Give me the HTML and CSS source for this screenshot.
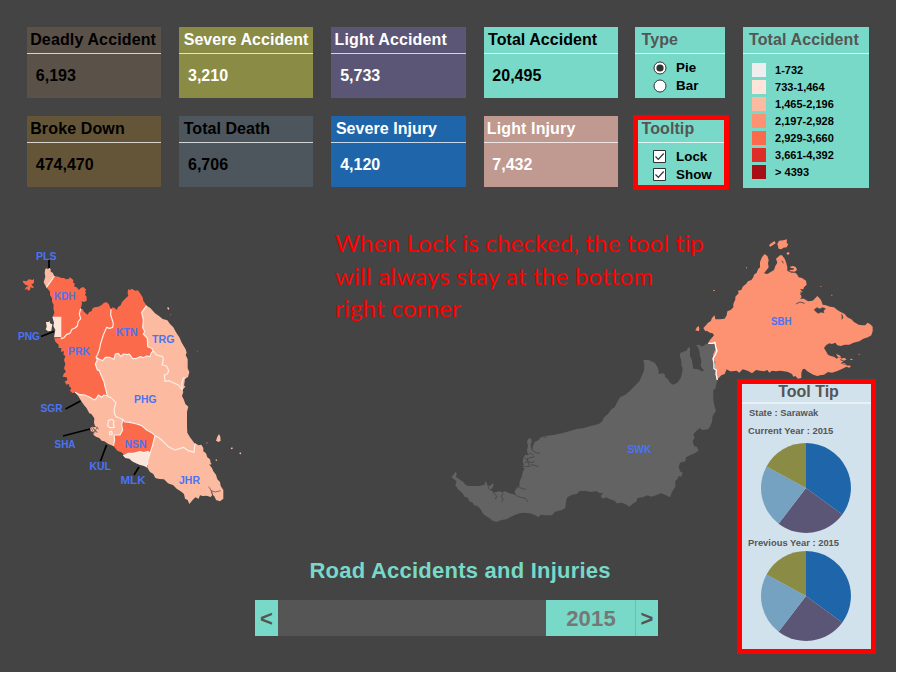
FILE: index.html
```html
<!DOCTYPE html>
<html lang="en">
<head>
<meta charset="utf-8">
<title>Road Accidents and Injuries</title>
<link rel="stylesheet" href="styles.css">
</head>
<body>
<main class="dashboard">
  <header class="top">
    <section class="stats">
      <article class="card deadly tight"><h2>Deadly Accident</h2><p>6,193</p></article>
      <article class="card severe light-text"><h2>Severe Accident</h2><p>3,210</p></article>
      <article class="card light light-text tight"><h2>Light Accident</h2><p>5,733</p></article>
      <article class="card total"><h2>Total Accident</h2><p>20,495</p></article>
      <article class="card broke tight"><h2>Broke Down</h2><p>474,470</p></article>
      <article class="card death"><h2>Total Death</h2><p>6,706</p></article>
      <article class="card severe-injury light-text"><h2>Severe Injury</h2><p>4,120</p></article>
      <article class="card light-injury light-text tight"><h2>Light Injury</h2><p>7,432</p></article>
    </section>
    <section class="controls">
      <div class="panel">
        <h2>Type</h2>
        <div class="options">
          <div class="option"><svg width="14" height="14" viewBox="0 0 14 14"><circle cx="7" cy="7" r="6" fill="#fff" stroke="#333"/><circle cx="7" cy="7" r="3.6" fill="#333"/></svg>Pie</div>
          <div class="option"><svg width="14" height="14" viewBox="0 0 14 14"><circle cx="7" cy="7" r="6" fill="#fff" stroke="#333"/></svg>Bar</div>
        </div>
      </div>
      <div class="panel marked">
        <h2>Tooltip</h2>
        <div class="options">
          <div class="option"><svg width="14" height="14" viewBox="0 0 14 14"><path d="M.5.5h12v12h-12z" fill="#fff" stroke="#333"/><path d="M2.5 6.5l2.8 2.8 5.4-5.8" fill="none" stroke="#333" stroke-width="1.2"/></svg>Lock</div>
          <div class="option"><svg width="14" height="14" viewBox="0 0 14 14"><path d="M.5.5h12v12h-12z" fill="#fff" stroke="#333"/><path d="M2.5 6.5l2.8 2.8 5.4-5.8" fill="none" stroke="#333" stroke-width="1.2"/></svg>Show</div>
        </div>
      </div>
    </section>
    <section class="legend">
      <h2>Total Accident</h2>
      <ul>
        <li><i class="s1"></i>1-732</li>
        <li><i class="s2"></i>733-1,464</li>
        <li><i class="s3"></i>1,465-2,196</li>
        <li><i class="s4"></i>2,197-2,928</li>
        <li><i class="s5"></i>2,929-3,660</li>
        <li><i class="s6"></i>3,661-4,392</li>
        <li><i class="s7"></i>&gt; 4393</li>
      </ul>
    </section>
  </header>

  <svg class="map" width="896" height="345" viewBox="0 200 896 345">
    <!-- Peninsular states, drawn at three times the map scale -->
    <g transform="translate(10 240) scale(.33333)">
      <!-- Langkawi, Perlis, Kedah -->
      <path class="c5" d="M38 122L50 124 56 118 68 120 72 116 72 128 64 134 72 142 66 145 62 140 60 150 54 152 52 146 44 150 48 142 56 138 46 134 40 128z"/>
      <path class="c3" d="M106 87L110 85 114 88 118 83 122 88 122 95 128 98 133 108 122 125 109 142 101 127 106 110 104 98z"/>
      <path class="c5" d="M133 108L145 110 155 114 162 114 168 118 176 117 180 112 190 120 189 128 194 130 193 140 200 142 207 150 212 144 220 141 229 150 225 153 228 158 225 164 230 170 230 182 222 186 215 184 216 192 212 206 208 222 212 236 204 246 202 258 195 264 186 268 180 280 170 283 162 293 153 296 128 232 133 218 130 205 131 195 126 185 126 175 120 165 120 155 109 142 122 125z"/>
      <!-- Perak -->
      <path class="c5" d="M212 206L218 208 222 215 232 224 238 216 245 213 247 206 253 202 265 200 275 195 282 188 290 187 296 192 303 208 302 225 310 250 308 262 298 265 290 262 280 285 272 310 268 330 262 345 258 352 262 360 256 372 262 390 268 392 273 405 282 425 285 440 288 450 292 468 282 465 275 472 265 465 260 474 253 480 240 472 225 465 210 464 195 457 188 460 180 452 184 444 178 440 177 432 170 434 164 425 172 420 170 412 158 410 162 400 168 396 162 385 166 372 162 360 166 348 160 344 162 334 153 335 154 324 146 324 146 314 136 305 133 295 162 293 170 283 180 280 186 268 195 264 202 258 204 246 212 236 208 222z"/>
      <!-- Kelantan -->
      <path class="c5" d="M303 208L308 202 315 205 320 210 324 201 332 196 336 186 342 180 350 172 355 168 353 160 354 148 360 150 366 146 375 152 384 151 390 160 398 172 400 182 410 197 395 217 400 240 398 262 404 275 400 282 412 295 413 320 425 325 430 333 424 338 420 350 410 348 400 353 390 350 380 355 368 356 358 342 352 344 340 342 333 350 325 340 316 342 312 358 298 352 286 352 278 362 268 358 258 352 262 345 268 330 272 310 280 285 290 262 298 265 308 262 310 250 302 225z"/>
      <!-- Terengganu -->
      <path class="c3" d="M410 197L421 204 435 220 448 229 458 237 472 241 480 252 490 262 498 277 508 292 516 310 527 328 530 338 527 345 533 358 533 385 538 396 534 412 525 415 524 425 522 436 526 440 517 450 505 435 490 428 478 422 465 424 463 405 472 402 476 392 470 378 456 375 460 360 458 350 440 345 430 333 425 325 413 320 412 295 400 282 404 275 398 262 400 240 395 217z"/>
      <!-- Pahang -->
      <path class="c3" d="M258 352L268 358 278 362 286 352 298 352 312 358 316 342 325 340 333 350 340 342 352 344 358 342 368 356 380 355 390 350 400 353 410 348 420 350 424 338 430 333 440 345 458 350 460 360 456 375 470 378 476 392 472 402 463 405 465 424 478 422 490 428 505 435 517 450 520 456 516 468 522 480 526 492 535 500 531 515 531 535 531 560 532 578 540 592 550 605 555 612 552 637 535 632 520 622 495 630 475 620 455 600 445 592 435 587 425 578 410 570 395 557 380 552 360 547 345 546 338 538 328 534 318 530 313 520 313 505 318 488 305 475 292 468 288 450 285 440 282 425 273 405 268 392 262 390 256 372 262 360z"/>
      <!-- Selangor and Kuala Lumpur -->
      <path class="c3" d="M195 457L210 464 225 465 240 472 253 480 260 474 265 465 275 472 282 465 292 468 305 475 318 488 313 505 313 520 318 530 328 534 338 538 335 555 338 570 330 585 312 585 314 600 310 618 295 612 283 604 275 602 268 594 258 590 250 584 251 576 243 574 240 565 247 560 256 562 252 548 253 535 244 522 238 520 230 505 222 495 215 485 206 470z"/>
      <path d="M243 564l10 16m-6-20l12 18m-4-20l12 10m-18 13l14-20m-12 6l12 10" stroke="#5b4b45" stroke-width="2"/>
      <!-- Negeri Sembilan, Melaka -->
      <path class="c5" d="M338 538L345 546 360 547 380 552 395 557 410 570 425 578 435 587 428 615 420 641 415 635 400 638 390 635 370 640 355 640 343 647 336 638 322 632 316 625 310 618 314 600 312 585 330 585 338 570 335 555z"/>
      <path class="c2" d="M338 646L355 640 370 640 390 635 400 638 415 635 420 641 414 660 412 683 402 678 388 674 378 670 366 664 358 656 346 654z"/>
      <!-- Johor -->
      <path class="c3" d="M435 587L445 592 455 600 475 620 495 630 520 622 535 632 552 637 555 610 566 616 574 614 580 624 580 634 588 640 592 652 600 658 602 668 598 674 606 684 610 694 618 704 622 718 630 726 632 738 640 750 640 776 630 784 618 780 614 770 608 764 602 771 590 767 578 768 570 766 566 776 556 772 548 780 538 792 533 780 525 776 522 762 514 755 500 746 490 736 474 730 462 718 448 717 436 714 430 702 420 696 412 683 414 660 420 641 428 615z"/>
      <path d="M596 740l8 12 4 14m-6-14l14 4 16-4m-24 14l-4-12" stroke="#54443f" stroke-width="2" fill="none"/>
      <path class="border" d="M133 108L122 125 109 142M212 206L208 222 212 236 204 246 202 258 195 264 186 268 180 280 170 283 162 293 153 296M303 208L302 225 310 250 308 262 298 265 290 262 280 285 272 310 268 330 262 345 258 352 262 360 256 372 262 390 268 392 273 405 282 425 285 440 288 450 292 468 282 465 275 472 265 465 260 474 253 480 240 472 225 465 210 464 195 457M258 352L268 358 278 362 286 352 298 352 312 358 316 342 325 340 333 350 340 342 352 344 358 342 368 356 380 355 390 350 400 353 410 348 420 350 424 338 430 333 425 325 413 320 412 295 400 282 404 275 398 262 400 240 395 217 410 197M430 333L440 345 458 350 460 360 456 375 470 378 476 392 472 402 463 405 465 424 478 422 490 428 505 435 517 450 515 432 520 414 528 414M292 468L305 475 318 488 313 505 313 520 318 530 328 534 338 538 345 546 360 547 380 552 395 557 410 570 425 578 435 587 445 592 455 600 475 620 495 630 520 622 535 632 552 637 555 610M338 538L335 555 338 570 330 585 312 585 314 600 310 618M343 647L355 640 370 640 390 635 400 638 415 635 420 641M435 587L428 615 420 641 414 660 412 675"/>
      <path class="border" d="M295 542L305 538 312 543 310 552 313 562 300 563 293 558zM298 576L305 574 307 582 300 585z"/>
      <path class="c2" d="M127 230H154V292H132L136 270 130 258 132 248z"/>
      <path class="c2" d="M108 246L116 246 119 242 120 250 127 253 125 265 124 272 114 274 107 268 110 260z"/>
      <path class="c3" d="M622 590L627 582 631 590 632 602 626 606 618 602zM665 622L669 624 666 628 662 626zM690 637L694 639 692 643 688 641zM590 607L593 609 590 611zM618 658L622 660 620 663 616 661zM600 668L605 671 602 674 598 672zM473 201L478 204 476 210 472 206zM481 223L484 224 482 226zM562 332L564 333 562 335z"/>
    </g>

    <!-- Sarawak -->
    <g transform="translate(440 340) scale(.33333)">
      <path class="sel" d="M34 411L40 405 46 395 50 400 48 412 54 415 62 421 70 426 76 434 86 438 118 438 128 436 134 434 136 424 140 428 142 436 150 438 158 430 161 434 157 444 152 450 162 458 176 454 186 457 196 454 208 460 218 462 226 466 224 456 228 444 238 438 239 424 246 408 248 396 254 386 246 380 252 374 248 366 250 352 256 344 264 345 261 330 264 318 261 304 267 294 274 298 275 306 272 322 276 330 278 320 284 306 296 300 302 292 316 288 340 285 366 280 390 273 410 267 432 264 452 258 468 254 480 250 488 242 492 232 504 222 514 208 524 202 530 190 540 172 556 164 570 152 584 138 598 124 606 106 612 92 613 76 610 60 626 60 644 68 652 80 656 92 656 102 668 100 674 102 676 112 684 118 690 128 700 134 712 128 722 114 726 100 728 84 724 76 724 62 719 46 722 38 734 34 740 32 744 22 750 24 750 48 756 60 758 76 760 86 774 88 786 94 792 92 782 78 784 62 780 48 778 34 774 22 768 16 778 14 786 20 798 12 806 10 818 8 827 8 830 28 824 50 820 66 822 88 830 96 832 120 826 146 820 150 820 180 824 200 828 212 818 228 816 246 810 260 804 268 786 270 780 264 768 274 760 284 764 294 758 302 762 318 770 320 776 332 764 340 750 346 738 352 736 364 720 368 716 380 720 394 728 398 724 410 716 408 712 418 706 422 706 440 696 456 690 472 678 466 664 460 648 466 634 470 622 466 608 472 592 474 590 484 580 490 568 500 556 492 544 488 530 490 524 482 510 478 498 472 488 476 482 468 490 458 480 460 470 454 452 456 434 452 418 454 410 462 396 464 382 472 378 484 376 504 366 510 356 512 344 516 336 526 318 526 302 524 296 532 286 526 270 520 252 518 240 520 226 524 210 532 200 538 184 540 170 546 158 542 148 534 138 528 128 520 122 508 112 498 102 496 98 488 88 484 84 474 74 470 66 458 54 448 46 436 50 424 42 418z"/>
      <path class="river" d="M222 458L232 468 242 472 256 475 264 486M228 448L236 440 246 446 258 448M250 350L258 358 268 354 284 350M254 368L262 364 276 368 284 364M246 380L266 380 276 374 296 380M272 310L278 332 288 338 300 340M260 345L272 340 280 346M262 356L266 376M160 458L170 468 166 478M190 458L184 470 190 478 184 486M144 438L148 448 156 452M310 290L320 292"/>
    </g>

    <!-- Sabah -->
    <g transform="translate(680 230) scale(.33333)">
      <path class="c4" d="M84 340L90 330 97 322 102 316 98 310 90 308 80 302 76 304 70 294 78 286 84 278 92 274 96 264 104 256 106 268 120 268 134 266 140 256 142 244 152 240 160 232 160 222 166 208 166 200 176 190 174 182 184 180 188 170 198 162 204 154 214 150 220 142 222 134 230 128 234 118 240 112 240 96 246 82 254 72 262 78 266 90 264 100 266 112 258 122 252 130 262 132 272 126 282 120 286 108 292 98 288 86 300 76 306 76 314 86 318 96 322 112 322 122 334 128 346 128 352 134 356 142 366 144 378 152 380 164 372 172 370 178 360 178 368 186 360 192 366 200 360 206 372 206 384 214 398 212 404 206 412 198 420 206 424 212 428 224 438 226 450 230 462 232 472 240 482 246 494 252 502 262 514 268 522 276 536 284 548 286 556 286 562 278 570 282 578 290 578 304 574 316 564 322 550 326 538 334 520 338 508 344 494 344 482 348 472 346 466 338 456 342 448 340 438 346 432 354 438 364 444 374 452 378 462 380 470 386 476 382 486 384 480 390 490 394 482 400 494 404 508 408 496 412 484 418 470 424 456 428 444 426 432 434 420 436 412 438 400 434 392 430 382 424 374 416 368 418 364 428 364 444 354 446 346 438 340 440 336 432 324 426 312 424 300 422 288 424 276 422 268 428 262 420 252 424 240 422 228 420 216 430 206 424 196 420 188 418 178 428 170 422 158 424 150 424 140 418 134 432 124 436 116 444 110 448 108 436 108 424 104 410 106 396 98 388 100 372 106 358 108 342z"/>
      <path class="c4" d="M267 47L271 41 284 33 287 40 278 46 271 50zM292 42L297 32 310 31 321 28 320 40 325 42 320 52 310 53 304 58 296 56zM319 69L326 66 329 71 323 75zM330 110L340 108 348 112 351 120 344 125 330 124 328 120 340 119 342 115 332 114zM46 301L51 292 56 288 58 296 57 304zM99 180h6v2h-6zM198 112h3v3h-3zM421 168h3v2h-3zM454 194h3v3h-3zM482 388L492 383 500 388 492 392zM484 401L494 400 500 404zM500 410L508 406 513 410 506 413zM468 372L478 376 484 382 474 382zM536 372h3v2h-3zM510 386l8 1-1 3-6-1z"/>
      <path class="hole" d="M403 239L411 233 419 237 428 233 436 236 430 243 432 248 423 246 415 250 408 245zM485 252L489 263 485 268"/>
      <path class="river" d="M364 200L374 198 384 208M348 222L360 216 374 220M360 186L370 190M157 205L164 210M306 92L310 100M446 348L460 352 470 362"/>
      <path class="white" d="M85 340L97 340 105 337 107 350 111 362 106 374 99 386 102 400 102 416 109 420 108 432 110 440 112 450"/>
    </g>

    <g class="leaders">
      <path d="M49 260v8M41 336.500l13-5M65.500 409l15-8M63 436l27-7M100.500 461l6-16M134 475l5-8"/>
    </g>
    <g class="labels">
      <text x="36" y="260" textLength="20.500" lengthAdjust="spacingAndGlyphs">PLS</text>
      <text x="54" y="300" textLength="21.500" lengthAdjust="spacingAndGlyphs">KDH</text>
      <text x="18" y="340" textLength="22" lengthAdjust="spacingAndGlyphs">PNG</text>
      <text x="68" y="355" textLength="22" lengthAdjust="spacingAndGlyphs">PRK</text>
      <text x="116" y="336" textLength="21.500" lengthAdjust="spacingAndGlyphs">KTN</text>
      <text x="152" y="343" textLength="22.500" lengthAdjust="spacingAndGlyphs">TRG</text>
      <text x="134" y="403" textLength="22.500" lengthAdjust="spacingAndGlyphs">PHG</text>
      <text x="40.500" y="412" textLength="22" lengthAdjust="spacingAndGlyphs">SGR</text>
      <text x="54.500" y="448" textLength="21" lengthAdjust="spacingAndGlyphs">SHA</text>
      <text x="124.500" y="448" textLength="22" lengthAdjust="spacingAndGlyphs">NSN</text>
      <text x="89.500" y="470" textLength="21.500" lengthAdjust="spacingAndGlyphs">KUL</text>
      <text x="120.500" y="484" textLength="25" lengthAdjust="spacingAndGlyphs">MLK</text>
      <text x="179" y="484" textLength="21" lengthAdjust="spacingAndGlyphs">JHR</text>
      <text x="627.500" y="453" textLength="24" lengthAdjust="spacingAndGlyphs">SWK</text>
      <text x="771" y="325" textLength="20.500" lengthAdjust="spacingAndGlyphs">SBH</text>
    </g>
  </svg>

  <footer class="timeline">
    <h1>Road Accidents and Injuries</h1>
    <div class="slider">
      <span class="step">&lt;</span>
      <span class="track"></span>
      <span class="year">2015</span>
      <span class="step next">&gt;</span>
    </div>
  </footer>

  <p class="note">When Lock is checked, the tool tip<br>will always stay at the bottom<br>right corner</p>

  <aside class="tooltip">
    <h2>Tool Tip</h2>
    <p class="state">State : Sarawak</p>
    <p class="current">Current Year : 2015</p>
    <svg class="pie" width="90" height="90" viewBox="-45 -45 90 90">
      <path fill="#1e66a9" d="M0 0V-45A45 45 0 0 1 36.300 26.500z"/>
      <path fill="#5b5675" d="M0 0L36.300 26.500A45 45 0 0 1-27.400 35.700z"/>
      <path fill="#74a2c0" d="M0 0L-27.400 35.700A45 45 0 0 1-39.500-21.500z"/>
      <path fill="#8a8c46" d="M0 0L-39.500-21.500A45 45 0 0 1 0-45z"/>
    </svg>
    <p class="previous">Previous Year : 2015</p>
    <svg class="pie" width="90" height="90" viewBox="-45 -45 90 90">
      <path fill="#1e66a9" d="M0 0V-45A45 45 0 0 1 36.300 26.500z"/>
      <path fill="#5b5675" d="M0 0L36.300 26.500A45 45 0 0 1-27.400 35.700z"/>
      <path fill="#74a2c0" d="M0 0L-27.400 35.700A45 45 0 0 1-39.500-21.500z"/>
      <path fill="#8a8c46" d="M0 0L-39.500-21.500A45 45 0 0 1 0-45z"/>
    </svg>
  </aside>
</main>
</body>
</html>
```

FILE: styles.css
```css
* { box-sizing: border-box; }
body { margin: 0; background: #fff; overflow: hidden; font-family: "Liberation Sans", Arial, sans-serif; font-weight: bold; }
h1, h2, p, ul { margin: 0; padding: 0; }
.dashboard { position: relative; width: 896px; height: 672px; background: #444; overflow: hidden; }

.top { display: flex; height: 200px; padding: 27px 0 0 27px; }
.stats { display: grid; grid-template-columns: repeat(4, 134.3px); grid-template-rows: 71.4px 71.4px; gap: 17.6px 17.9px; }
h2 { height: 27px; font-size: 16px; line-height: 25px; border-bottom: 1px solid rgba(255, 255, 255, .75); white-space: nowrap; }
.card { color: #000; }
.card h2 { padding-left: 4.5px; letter-spacing: .05px; }
.card.tight h2 { padding-left: 3.2px; letter-spacing: .13px; }
.card p { padding-left: 8.800px; font-size: 16px; line-height: 43px; }
.light-text { color: #fff; }
.deadly { background: #5a5149; }
.severe { background: #8a8c46; }
.light { background: #5b5675; }
.total { background: #78d9c8; }
.broke { background: #655538; }
.death { background: #4d565d; }
.severe-injury { background: #1e66a9; }
.light-injury { background: #c09990; }

.controls { display: grid; grid-template-rows: 71.4px 71.4px; gap: 17.6px; width: 90px; margin-left: 17.6px; }
.panel { position: relative; background: #78d9c8; }
.panel h2, .legend h2 { padding-left: 6px; color: #555; letter-spacing: .1px; }
.marked::after { content: ""; position: absolute; inset: -1px -3.500px -2.500px -2.500px; border: 5px solid #f00; }
.options { padding: 5px 0 0 17.8px; }
.option { display: flex; align-items: center; gap: 8.800px; height: 18px; font-size: 13.4px; line-height: 18px; color: #000; }

.legend { width: 126px; height: 161px; margin-left: 17.6px; background: #78d9c8; }
.legend ul { padding: 7.500px 0 0 9px; list-style: none; }
.legend li { display: flex; align-items: center; gap: 9px; height: 17px; font-size: 11px; color: #000; }
.legend i { width: 14px; height: 14px; }
.s1 { background: #eee; }
.s2 { background: #fee5d9; }
.s3 { background: #fcbba1; }
.s4 { background: #fc9272; }
.s5 { background: #fb6a4a; }
.s6 { background: #de2d26; }
.s7 { background: #a50f15; }

.map { display: block; }
.c2 { fill: #fee5d9; }
.c3 { fill: #fcbba1; }
.c4 { fill: #fc9272; }
.c5 { fill: #fb6a4a; }
.sel { fill: #636363; }
.border { fill: none; stroke: #fff0ea; stroke-width: 3.500; stroke-linejoin: round; }
.white { fill: none; stroke: #fff; stroke-width: 4; stroke-linejoin: round; }
.river { fill: none; stroke: #444; stroke-width: 2.500; }
.hole { fill: #444; stroke: #444; stroke-width: 2; }
.leaders { fill: none; stroke: #000; stroke-width: 1.7; }
.labels { font-size: 11px; fill: #4a73f5; }

.timeline h1 { height: 55px; padding: 10.500px 0 0 309.5px; color: #78d9c8; font-size: 22px; line-height: 30px; letter-spacing: .23px; white-space: nowrap; }
.slider { display: flex; width: 403px; height: 36px; margin-left: 255px; background: #555; color: #555; font-size: 22px; line-height: 37px; text-align: center; }
.step { width: 23px; background: #78d9c8; }
.track { flex: 1; }
.year { width: 89px; padding-left: 1px; background: #78d9c8; color: #777; letter-spacing: .2px; }
.next { border-left: 1px solid #6bbfb2; }

.note { position: absolute; left: 335px; top: 227px; color: #f00; font: 400 24px/32.6px Lato, sans-serif; letter-spacing: .21px; white-space: nowrap; }

.tooltip { position: absolute; left: 737px; top: 379px; width: 139px; height: 275px; border: 5px solid #f00; background: #d1e2ec; color: #555; font-size: 9.4px; }
.tooltip h2 { height: 20px; padding-left: 4px; border-bottom: 2px solid #e8f1f6; line-height: 16px; text-align: center; }
.tooltip p { padding-left: 6px; line-height: 18px; }
.tooltip .state { padding-left: 7px; }
.tooltip .current { height: 21px; }
.tooltip .previous { height: 17.5px; line-height: 20px; }
.pie { display: block; margin-left: 19px; }
```
